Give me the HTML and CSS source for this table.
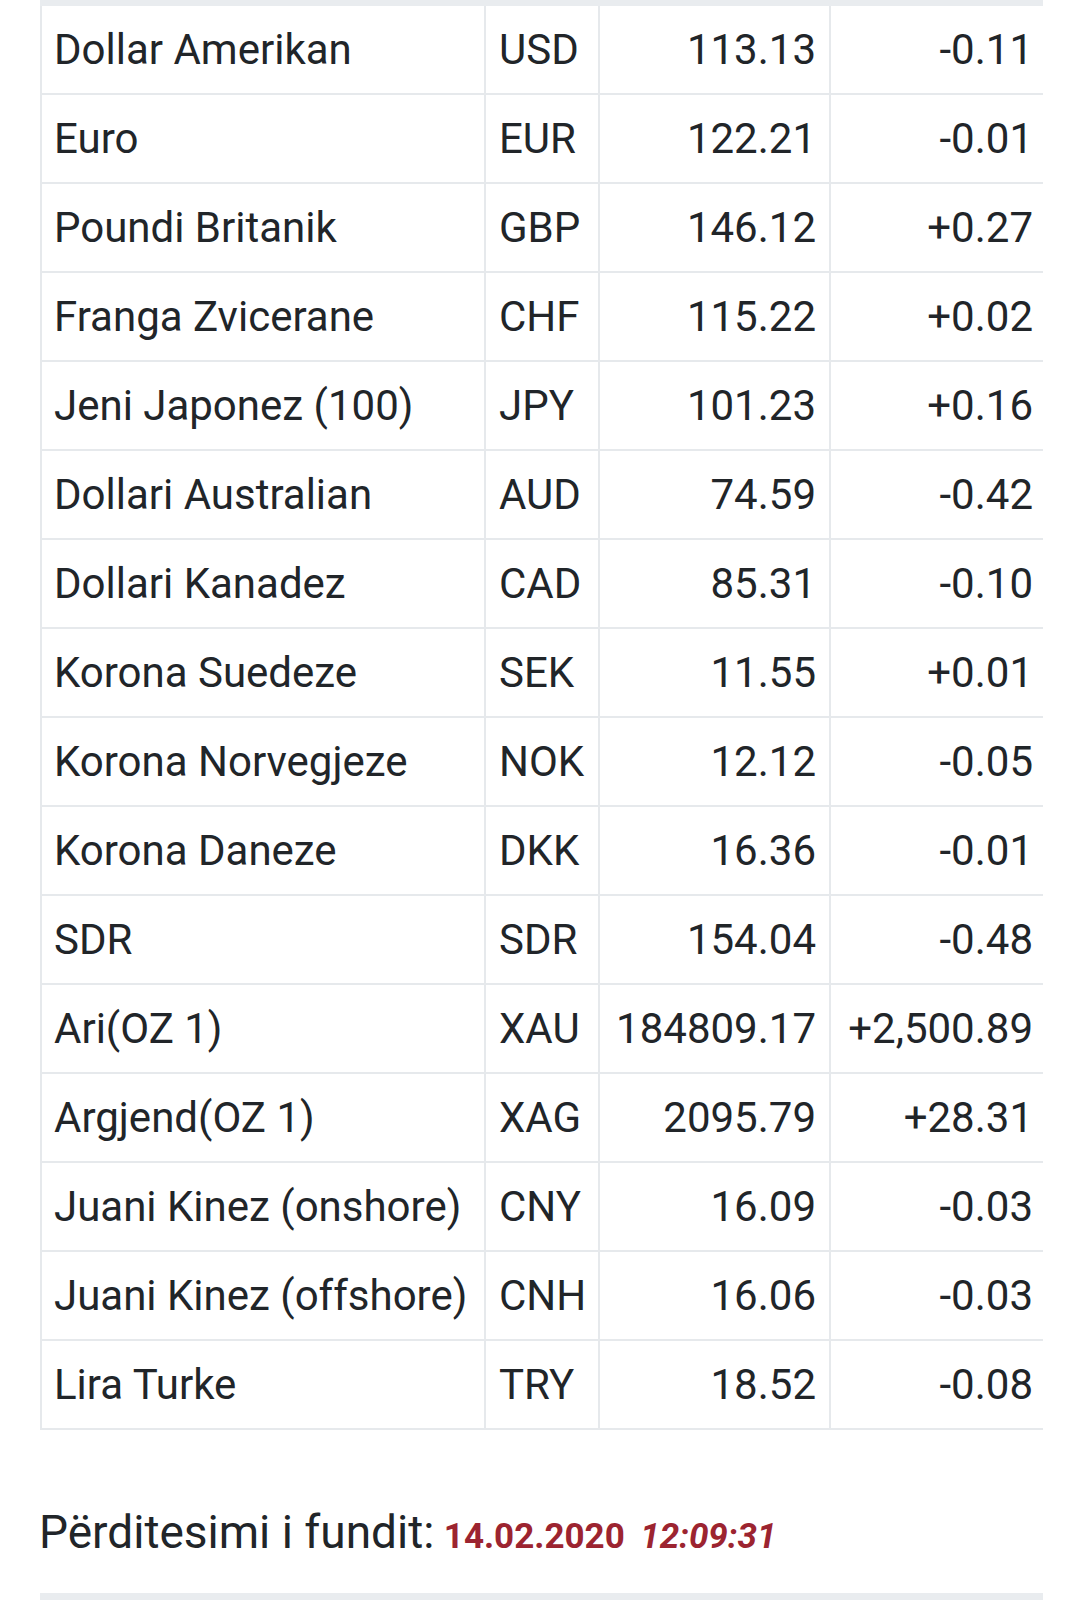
FILE: index.html
```html
<!DOCTYPE html>
<html lang="sq">
<head>
<meta charset="utf-8">
<title>Kurset e këmbimit</title>
<link rel="stylesheet" href="styles.css">
</head>
<body>
<div class="page">
  <div class="top-bar"></div>
  <table class="rates">
    <tbody>
      <tr><td class="c-name">Dollar Amerikan</td><td class="c-code">USD</td><td class="c-num">113.13</td><td class="c-chg">-0.11</td></tr>
      <tr><td class="c-name">Euro</td><td class="c-code">EUR</td><td class="c-num">122.21</td><td class="c-chg">-0.01</td></tr>
      <tr><td class="c-name">Poundi Britanik</td><td class="c-code">GBP</td><td class="c-num">146.12</td><td class="c-chg">+0.27</td></tr>
      <tr><td class="c-name">Franga Zvicerane</td><td class="c-code">CHF</td><td class="c-num">115.22</td><td class="c-chg">+0.02</td></tr>
      <tr><td class="c-name">Jeni Japonez (100)</td><td class="c-code">JPY</td><td class="c-num">101.23</td><td class="c-chg">+0.16</td></tr>
      <tr><td class="c-name">Dollari Australian</td><td class="c-code">AUD</td><td class="c-num">74.59</td><td class="c-chg">-0.42</td></tr>
      <tr><td class="c-name">Dollari Kanadez</td><td class="c-code">CAD</td><td class="c-num">85.31</td><td class="c-chg">-0.10</td></tr>
      <tr><td class="c-name">Korona Suedeze</td><td class="c-code">SEK</td><td class="c-num">11.55</td><td class="c-chg">+0.01</td></tr>
      <tr><td class="c-name">Korona Norvegjeze</td><td class="c-code">NOK</td><td class="c-num">12.12</td><td class="c-chg">-0.05</td></tr>
      <tr><td class="c-name">Korona Daneze</td><td class="c-code">DKK</td><td class="c-num">16.36</td><td class="c-chg">-0.01</td></tr>
      <tr><td class="c-name">SDR</td><td class="c-code">SDR</td><td class="c-num">154.04</td><td class="c-chg">-0.48</td></tr>
      <tr><td class="c-name">Ari(OZ 1)</td><td class="c-code">XAU</td><td class="c-num">184809.17</td><td class="c-chg">+2,500.89</td></tr>
      <tr><td class="c-name">Argjend(OZ 1)</td><td class="c-code">XAG</td><td class="c-num">2095.79</td><td class="c-chg">+28.31</td></tr>
      <tr><td class="c-name">Juani Kinez (onshore)</td><td class="c-code">CNY</td><td class="c-num">16.09</td><td class="c-chg">-0.03</td></tr>
      <tr><td class="c-name">Juani Kinez (offshore)</td><td class="c-code">CNH</td><td class="c-num">16.06</td><td class="c-chg">-0.03</td></tr>
      <tr><td class="c-name">Lira Turke</td><td class="c-code">TRY</td><td class="c-num">18.52</td><td class="c-chg">-0.08</td></tr>
    </tbody>
  </table>
  <p class="updated">Përditesimi i fundit: <span class="upd-date">14.02.2020</span> <span class="upd-time">12:09:31</span></p>
  <div class="bottom-bar"></div>
</div>
</body>
</html>
```
FILE: styles.css
```css
html, body {
  margin: 0;
  padding: 0;
  background: #ffffff;
}

body {
  font-family: Roboto, "Liberation Sans", Arial, sans-serif;
  color: #212529;
}

.page {
  width: 1003px;
  margin-left: 40px;
}

.top-bar {
  height: 6px;
  background: #e9ecef;
}

.rates {
  width: 1003px;
  table-layout: fixed;
  border-collapse: separate;
  border-spacing: 0;
  border-left: 2px solid #e6e9ec;
  font-size: 42px;
}

.rates td {
  box-sizing: border-box;
  height: 89px;
  padding: 0 14px;
  line-height: 87px;
  border-right: 2px solid #e6e9ec;
  border-bottom: 2px solid #e6e9ec;
  white-space: nowrap;
  vertical-align: middle;
}

.rates .c-name {
  width: 444px;
  padding-left: 12px;
  text-align: left;
}

.rates .c-code {
  width: 114px;
  padding-left: 13px;
  text-align: left;
}

.rates .c-num {
  width: 231px;
  padding-right: 13px;
  text-align: right;
}

.rates .c-chg {
  width: 212px;
  padding-right: 10px;
  border-right: 0;
  text-align: right;
}

.updated {
  margin: 72px 0 26px -1px;
  font-size: 46px;
  line-height: 60px;
  color: #212529;
}

.upd-date,
.upd-time {
  font-size: 35px;
  font-weight: 700;
  color: #9c2430;
}

.upd-date {
  margin-left: -2px;
}

.upd-time {
  font-style: italic;
  margin-left: 4px;
}

.bottom-bar {
  height: 12px;
  background: #e9ecef;
}
```
